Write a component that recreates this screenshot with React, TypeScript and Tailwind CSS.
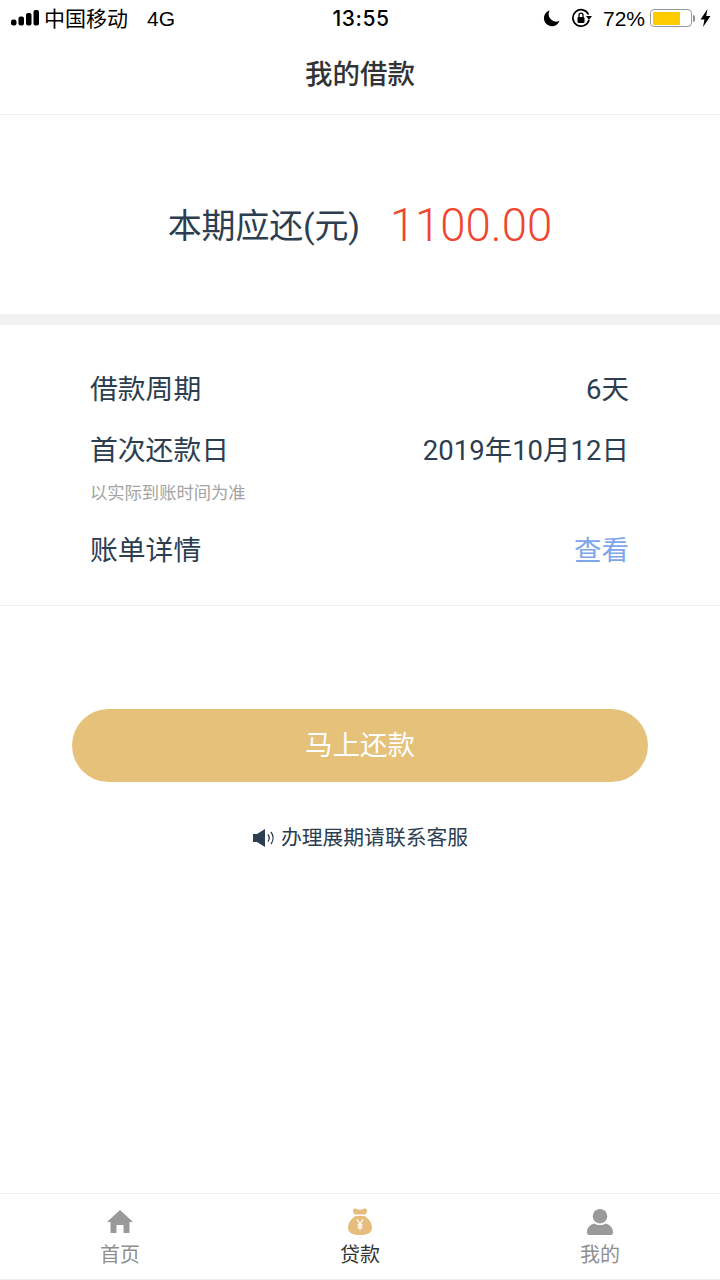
const font = "font-['Liberation_Sans','Noto_Sans_CJK_SC',sans-serif]";

function StatusBar() {
  return (
    <div className="h-[38px] pb-[2px] flex items-center justify-between pl-[11px] pr-[9px] text-black">
      <div className="w-[240px] flex items-center">
        <svg width="28" height="16" viewBox="0 0 28 16" fill="currentColor">
          <rect x="0" y="9.5" width="5.5" height="6" rx="2.2" />
          <rect x="7.5" y="6.5" width="5.5" height="9" rx="2" />
          <rect x="15" y="3" width="5.5" height="12.5" rx="2" />
          <rect x="22.5" y="0" width="5.5" height="15.5" rx="2" />
        </svg>
        <span className="ml-[5px] text-[21px] leading-none">中国移动</span>
        <span className="ml-[19px] text-[21px] leading-none">4G</span>
      </div>
      <span className="text-[21px] leading-none font-['Inter'] font-medium tracking-[0.6px]">13:55</span>
      <div className="w-[240px] flex items-center justify-end">
        <svg width="17" height="18" viewBox="0 0 18 18" fill="currentColor">
          <path d="M7 1 A8.5 8.5 0 1 0 17.5 12 A8 8 0 0 1 7 1Z" />
        </svg>
        <svg className="ml-[11px]" width="21" height="20" viewBox="0 0 21 20" fill="none" stroke="currentColor">
          <path d="M17.5 6.5A8.2 8.2 0 1 0 18 12" strokeWidth="1.7" />
          <path d="M15 8h6l-3 4z" fill="currentColor" stroke="none" />
          <rect x="6.5" y="9" width="7" height="6" rx="1" fill="currentColor" stroke="none" />
          <path d="M8 9V7.2a2 2 0 0 1 4 0V9" strokeWidth="1.3" />
        </svg>
        <span className="ml-[11px] text-[21px] leading-none">72%</span>
        <div className="ml-[5px] w-[42px] h-[18px] rounded-[4px] border-[1.5px] border-[#9a9a9a] p-[1.5px]">
          <div className="w-[27px] h-full bg-[#fdcb00] rounded-[1px]" />
        </div>
        <div className="ml-[1px] w-[2px] h-[7px] bg-[#8e8e8e] rounded-r-full" />
        <svg className="ml-[5px]" width="11" height="18" viewBox="0 0 11 18" fill="currentColor">
          <path d="M7.5 0 L0.5 10.5 H4.5 L3 18 L10.5 7 H6.2Z" />
        </svg>
      </div>
    </div>
  );
}

function Row({ label, value, valueClass = 'text-[#2c3e50]' }: { label: string; value: string; valueClass?: string }) {
  return (
    <div className="flex items-center justify-between">
      <span className="text-[27.8px] leading-[40px] text-[#2c3e50]">{label}</span>
      <span className={`text-[27.5px] leading-[40px] font-['Roboto','Noto_Sans_CJK_SC',sans-serif] ${valueClass}`}>{value}</span>
    </div>
  );
}

function TabItem({ label, active, children }: { label: string; active?: boolean; children: React.ReactNode }) {
  return (
    <div className="flex-1 flex flex-col items-center">
      <div className="h-[30px] flex items-start justify-center">{children}</div>
      <span className={`mt-[3px] text-[20px] leading-[28px] ${active ? 'text-[#333333]' : 'text-[#8f8f8f]'}`}>{label}</span>
    </div>
  );
}

export default function App() {
  return (
    <div className={`${font} w-[720px] h-[1280px] bg-white flex flex-col overflow-hidden`}>
      <StatusBar />
      {/* Header */}
      <div className="h-[77px] flex items-center justify-center border-b border-[#eeeeee]">
        <span className="text-[27.5px] font-medium text-[#333333] -translate-y-[1px]">我的借款</span>
      </div>

      {/* Amount */}
      <div className="h-[199px] pt-[24px] flex items-center justify-center">
        <span className="text-[34px] font-['Roboto','Noto_Sans_CJK_SC',sans-serif] tracking-[-0.2px] text-[#2c3e50]">本期应还(元)</span>
        <span className="ml-[30px] text-[45.5px] font-['Roboto'] font-light text-[#ef4630]">1100.00</span>
      </div>
      <div className="h-[11px] bg-[#f1f1f1]" />

      {/* Details */}
      <div className="h-[281px] pl-[90px] pr-[91px] pt-[45px] border-b border-[#eeeeee]">
        <Row label="借款周期" value="6天" />
        <div className="mt-[21px]">
          <Row label="首次还款日" value="2019年10月12日" />
        </div>
        <p className="mt-[10px] text-[17.3px] leading-[24px] text-[#a3a3a3]">以实际到账时间为准</p>
        <div className="mt-[26px]">
          <Row label="账单详情" value="查看" valueClass="text-[#7ea6ea]" />
        </div>
      </div>

      {/* Repay */}
      <div className="px-[72px] pt-[103px]">
        <div className="h-[73px] pt-[1px] rounded-[37px] bg-[#e6c17a] flex items-center justify-center text-[27.5px] text-white">
          马上还款
        </div>
      </div>
      <div className="mt-[41px] flex items-center justify-center">
        <svg width="24" height="20" viewBox="0 0 24 20" fill="none" className="text-[#2c3e50]">
          <path d="M1 6h4l8-5v18l-8-5H1z" fill="currentColor" />
          <path d="M16 6.5a6 6 0 0 1 0 7M19 4a10 10 0 0 1 0 12" stroke="currentColor" strokeWidth="1.3" />
        </svg>
        <span className="ml-[5px] text-[20.8px] leading-[30px] text-[#2c3e50]">办理展期请联系客服</span>
      </div>

      {/* Tabs */}
      <div className="mt-auto h-[87px] pt-[14px] border-t border-b border-[#eeeeee] flex">
        <TabItem label="首页">
          <svg width="26" height="23" viewBox="0 0 26 23" fill="#9a9a9a" className="mt-[2px]">
            <path d="M13 0 L26 12 H22.5 V23 H16.5 V15 H9.5 V23 H3.5 V12 H0Z" />
          </svg>
        </TabItem>
        <TabItem label="贷款" active>
          <svg width="24" height="27" viewBox="0 0 24 27" fill="#e6bd7c">
            <path d="M5 2.2 C5.5 0.2 8 0 9.5 1.2 C11 2 13 2 14.5 1.2 C16 0 18.5 0.2 19 2.2 C19.3 4 18 5.8 16.8 6.6 H7.2 C6 5.8 4.7 4 5 2.2Z" />
            <path d="M7.5 8 H16.5 C20.5 10.5 24 14.5 24 19.5 C24 25 19.5 27 12 27 C4.5 27 0 25 0 19.5 C0 14.5 3.5 10.5 7.5 8Z" />
            <path d="M9 11.5 L12 16 L15 11.5 M12 16 V22.5 M9.5 17 H14.5 M9.5 19.5 H14.5" stroke="#ffffff" strokeWidth="1.3" fill="none" />
          </svg>
        </TabItem>
        <TabItem label="我的">
          <svg width="26" height="26" viewBox="0 0 26 26" fill="#9a9a9a" className="mt-[1px]">
            <ellipse cx="13" cy="7.2" rx="7.3" ry="7.2" />
            <path d="M7.5 14.5 C10 16.5 16 16.5 18.5 14.5 C22.5 15.5 26 18.5 26 23 C26 25 25 26 24 26 H2 C1 26 0 25 0 23 C0 18.5 3.5 15.5 7.5 14.5Z" />
          </svg>
        </TabItem>
      </div>
    </div>
  );
}
